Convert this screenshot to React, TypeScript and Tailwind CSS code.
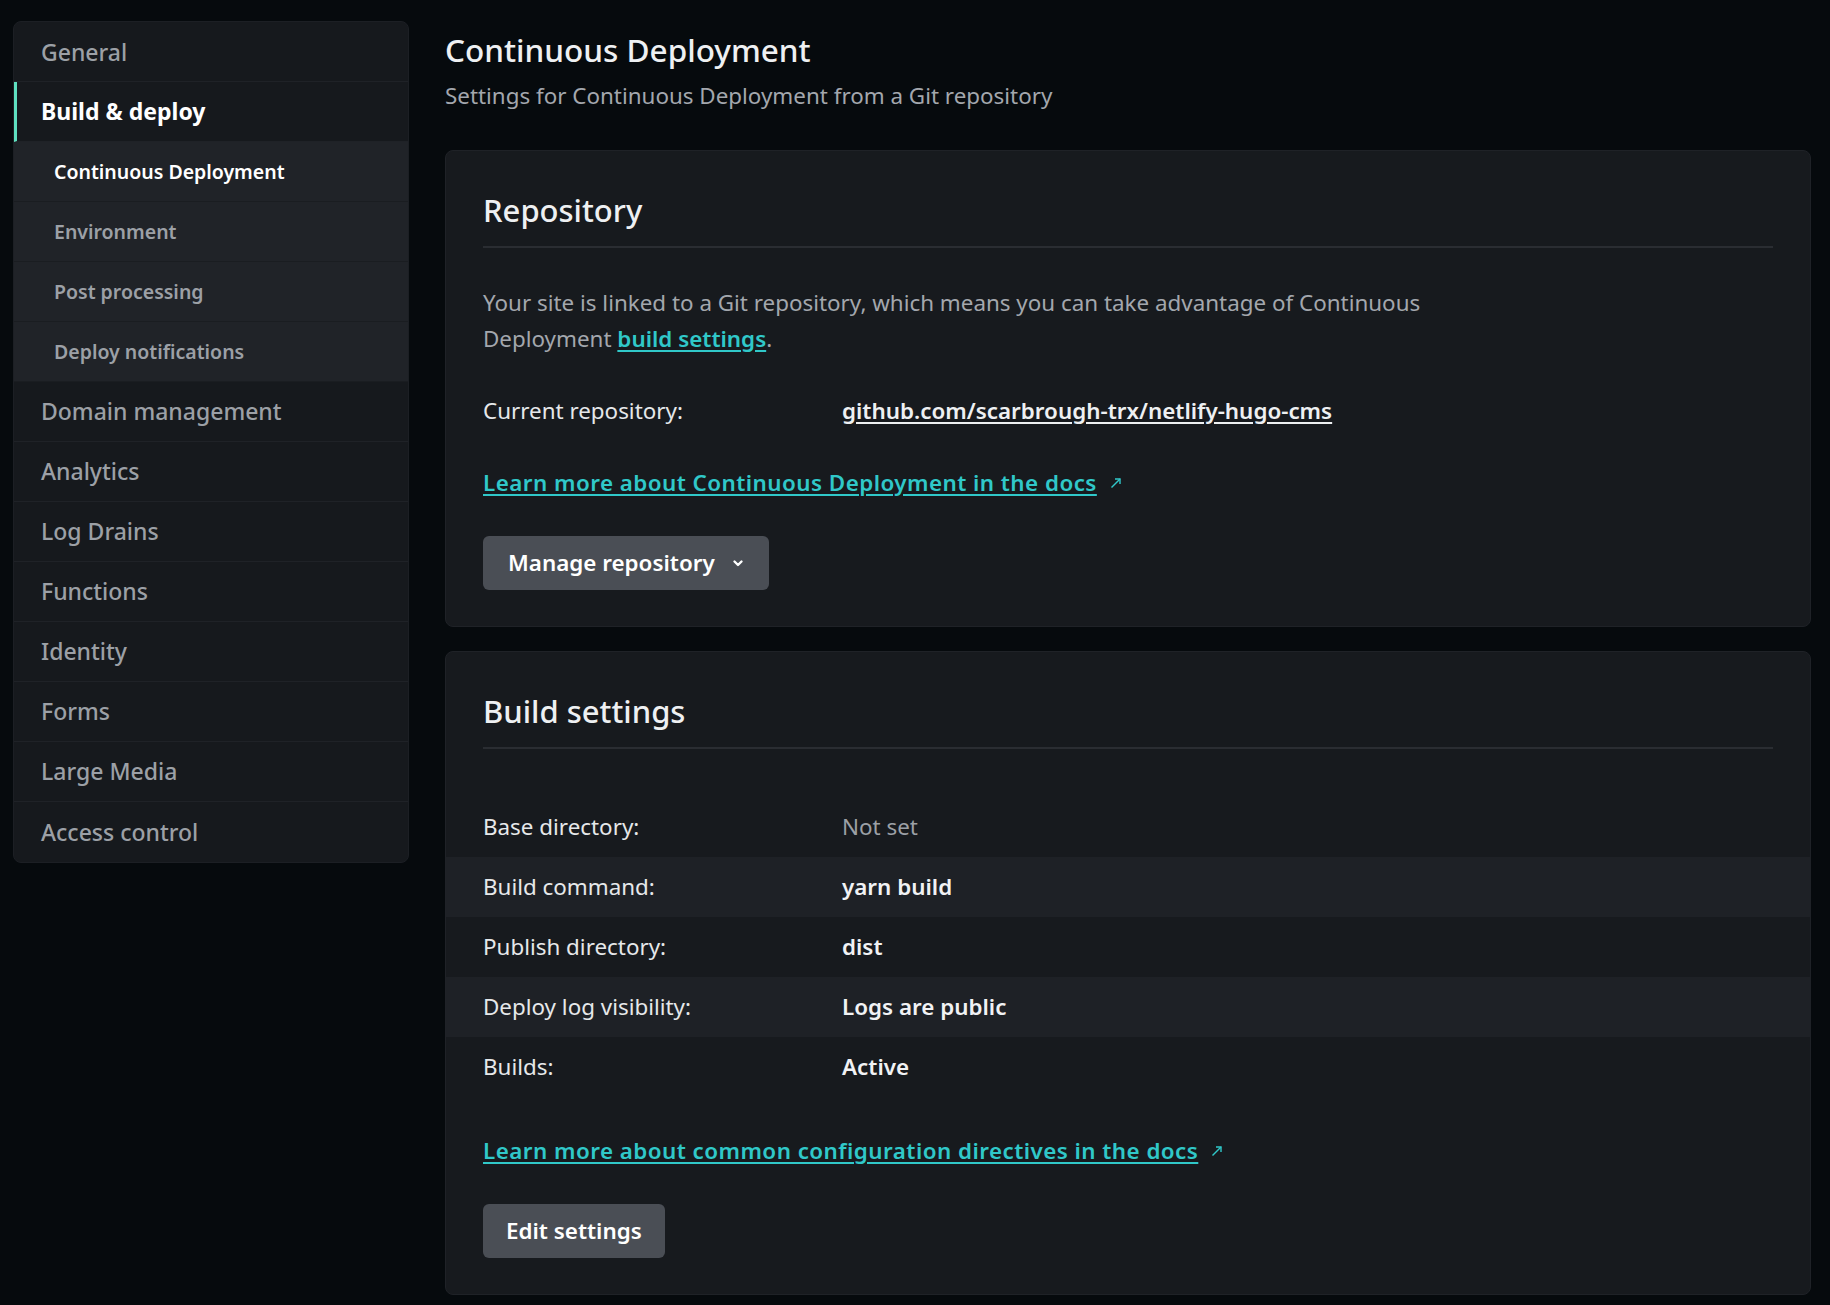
import React from 'react';

const font = { fontFamily: '"Noto Sans", "Open Sans", sans-serif' };

const mainNav = ['General'];
const subNav = ['Continuous Deployment', 'Environment', 'Post processing', 'Deploy notifications'];
const restNav = ['Domain management', 'Analytics', 'Log Drains', 'Functions', 'Identity', 'Forms', 'Large Media', 'Access control'];

const buildRows = [
  { label: 'Base directory:', value: 'Not set', muted: true },
  { label: 'Build command:', value: 'yarn build' },
  { label: 'Publish directory:', value: 'dist' },
  { label: 'Deploy log visibility:', value: 'Logs are public' },
  { label: 'Builds:', value: 'Active' },
];

function ExternalArrow() {
  return (
    <svg width="14" height="14" viewBox="0 0 14 14" className="ml-3 inline-block" fill="none" stroke="#30c8c9" strokeWidth="1.4">
      <path d="M2.5 11.5 L11 3" />
      <path d="M6 3 H11 V8" />
    </svg>
  );
}

function Sidebar() {
  return (
    <nav className="w-[396px] shrink-0 self-start rounded-lg border border-[#1c1f24] bg-[#16191d] overflow-hidden">
      {mainNav.map((item) => (
        <div key={item} className="h-[60px] flex items-center pl-[27px] pt-[2px] border-b border-[#1f2227] text-[23px] font-medium text-[#9ca0a6]">
          {item}
        </div>
      ))}
      <div className="h-[60px] flex items-center pl-[24px] border-l-[3px] border-[#5ee0c0] border-b border-b-[#1f2227] text-[23px] font-bold text-white">
        Build &amp; deploy
      </div>
      {subNav.map((item, i) => (
        <div
          key={item}
          className={`h-[60px] flex items-center pl-[40px] border-b border-[#1a1d21] bg-[#202328] text-[19.5px] font-semibold ${i === 0 ? 'text-white' : 'text-[#9ca0a6]'}`}
        >
          {item}
        </div>
      ))}
      {restNav.map((item, i) => (
        <div
          key={item}
          className={`h-[60px] flex items-center pl-[27px] text-[23px] font-medium text-[#9ca0a6] ${i < restNav.length - 1 ? 'border-b border-[#1f2227]' : ''}`}
        >
          {item}
        </div>
      ))}
    </nav>
  );
}

export default function App() {
  return (
    <div className="min-h-[1305px] bg-[#060a0d] text-white" style={font}>
      <div className="flex items-start gap-[36px] pl-[13px] pr-[19px] pt-[21px]">
        <Sidebar />
        <main className="flex-1 min-w-0">
          <h1 className="mt-[9px] text-[31.5px] leading-[40px] font-medium text-[#eef0f2]">Continuous Deployment</h1>
          <p className="mt-[11px] text-[22.4px] leading-[30px] text-[#a3a7ad]">Settings for Continuous Deployment from a Git repository</p>

          <section className="mt-[39px] rounded-lg border border-[#1f2227] bg-[#171a1e] px-[37px] pt-[37px] pb-[36px]">
            <h2 className="text-[31px] leading-[44px] font-medium text-[#eef0f2]">Repository</h2>
            <div className="mt-[14px] h-[2px] bg-[#2a2d32]" />
            <p className="mt-[37px] max-w-[990px] text-[22.4px] leading-[36px] text-[#a3a7ad]">
              Your site is linked to a Git repository, which means you can take advantage of Continuous Deployment{' '}
              <a className="font-semibold text-[#30c8c9] underline underline-offset-[3px]" href="#">build settings</a>.
            </p>
            <div className="mt-[36px] flex items-center text-[22.4px] leading-[36px]">
              <span className="w-[359px] text-[#e6e8ea]">Current repository:</span>
              <a className="font-semibold text-[#eef0f2] underline underline-offset-[3px]" href="#">github.com/scarbrough-trx/netlify-hugo-cms</a>
            </div>
            <div className="mt-[36px] flex items-center text-[22.4px] leading-[36px]">
              <a className="font-semibold tracking-[0.45px] text-[#30c8c9] underline underline-offset-[3px]" href="#">Learn more about Continuous Deployment in the docs</a>
              <ExternalArrow />
            </div>
            <button className="mt-[35px] h-[54px] px-[25px] flex items-center gap-[17px] rounded-md bg-[#4a4e55] text-[22.4px] font-semibold text-white">
              Manage repository
              <svg width="12" height="12" viewBox="0 0 12 12" fill="none" stroke="white" strokeWidth="2.4" strokeLinecap="round" strokeLinejoin="round">
                <path d="M2.5 4.5 L6 8 L9.5 4.5" />
              </svg>
            </button>
          </section>

          <section className="mt-[24px] rounded-lg border border-[#1f2227] bg-[#171a1e] pt-[37px] pb-[36px]">
            <div className="px-[37px]">
              <h2 className="text-[31px] leading-[44px] font-medium text-[#eef0f2]">Build settings</h2>
              <div className="mt-[14px] h-[2px] bg-[#2a2d32]" />
            </div>
            <div className="mt-[48px]">
              {buildRows.map((row, i) => (
                <div key={row.label} className={`h-[60px] flex items-center px-[37px] text-[22.4px] ${i % 2 === 1 ? 'bg-[#1e2126]' : ''}`}>
                  <span className="w-[359px] text-[#e6e8ea]">{row.label}</span>
                  <span className={row.muted ? 'text-[#9ca0a6]' : 'font-semibold text-[#f1f2f4]'}>{row.value}</span>
                </div>
              ))}
            </div>
            <div className="px-[37px]">
              <div className="mt-[36px] flex items-center text-[22.4px] leading-[36px]">
                <a className="font-semibold tracking-[0.45px] text-[#30c8c9] underline underline-offset-[3px]" href="#">Learn more about common configuration directives in the docs</a>
                <ExternalArrow />
              </div>
              <button className="mt-[35px] h-[54px] px-[23px] rounded-md bg-[#4a4e55] text-[22.4px] font-semibold text-white">
                Edit settings
              </button>
            </div>
          </section>
        </main>
      </div>
    </div>
  );
}
